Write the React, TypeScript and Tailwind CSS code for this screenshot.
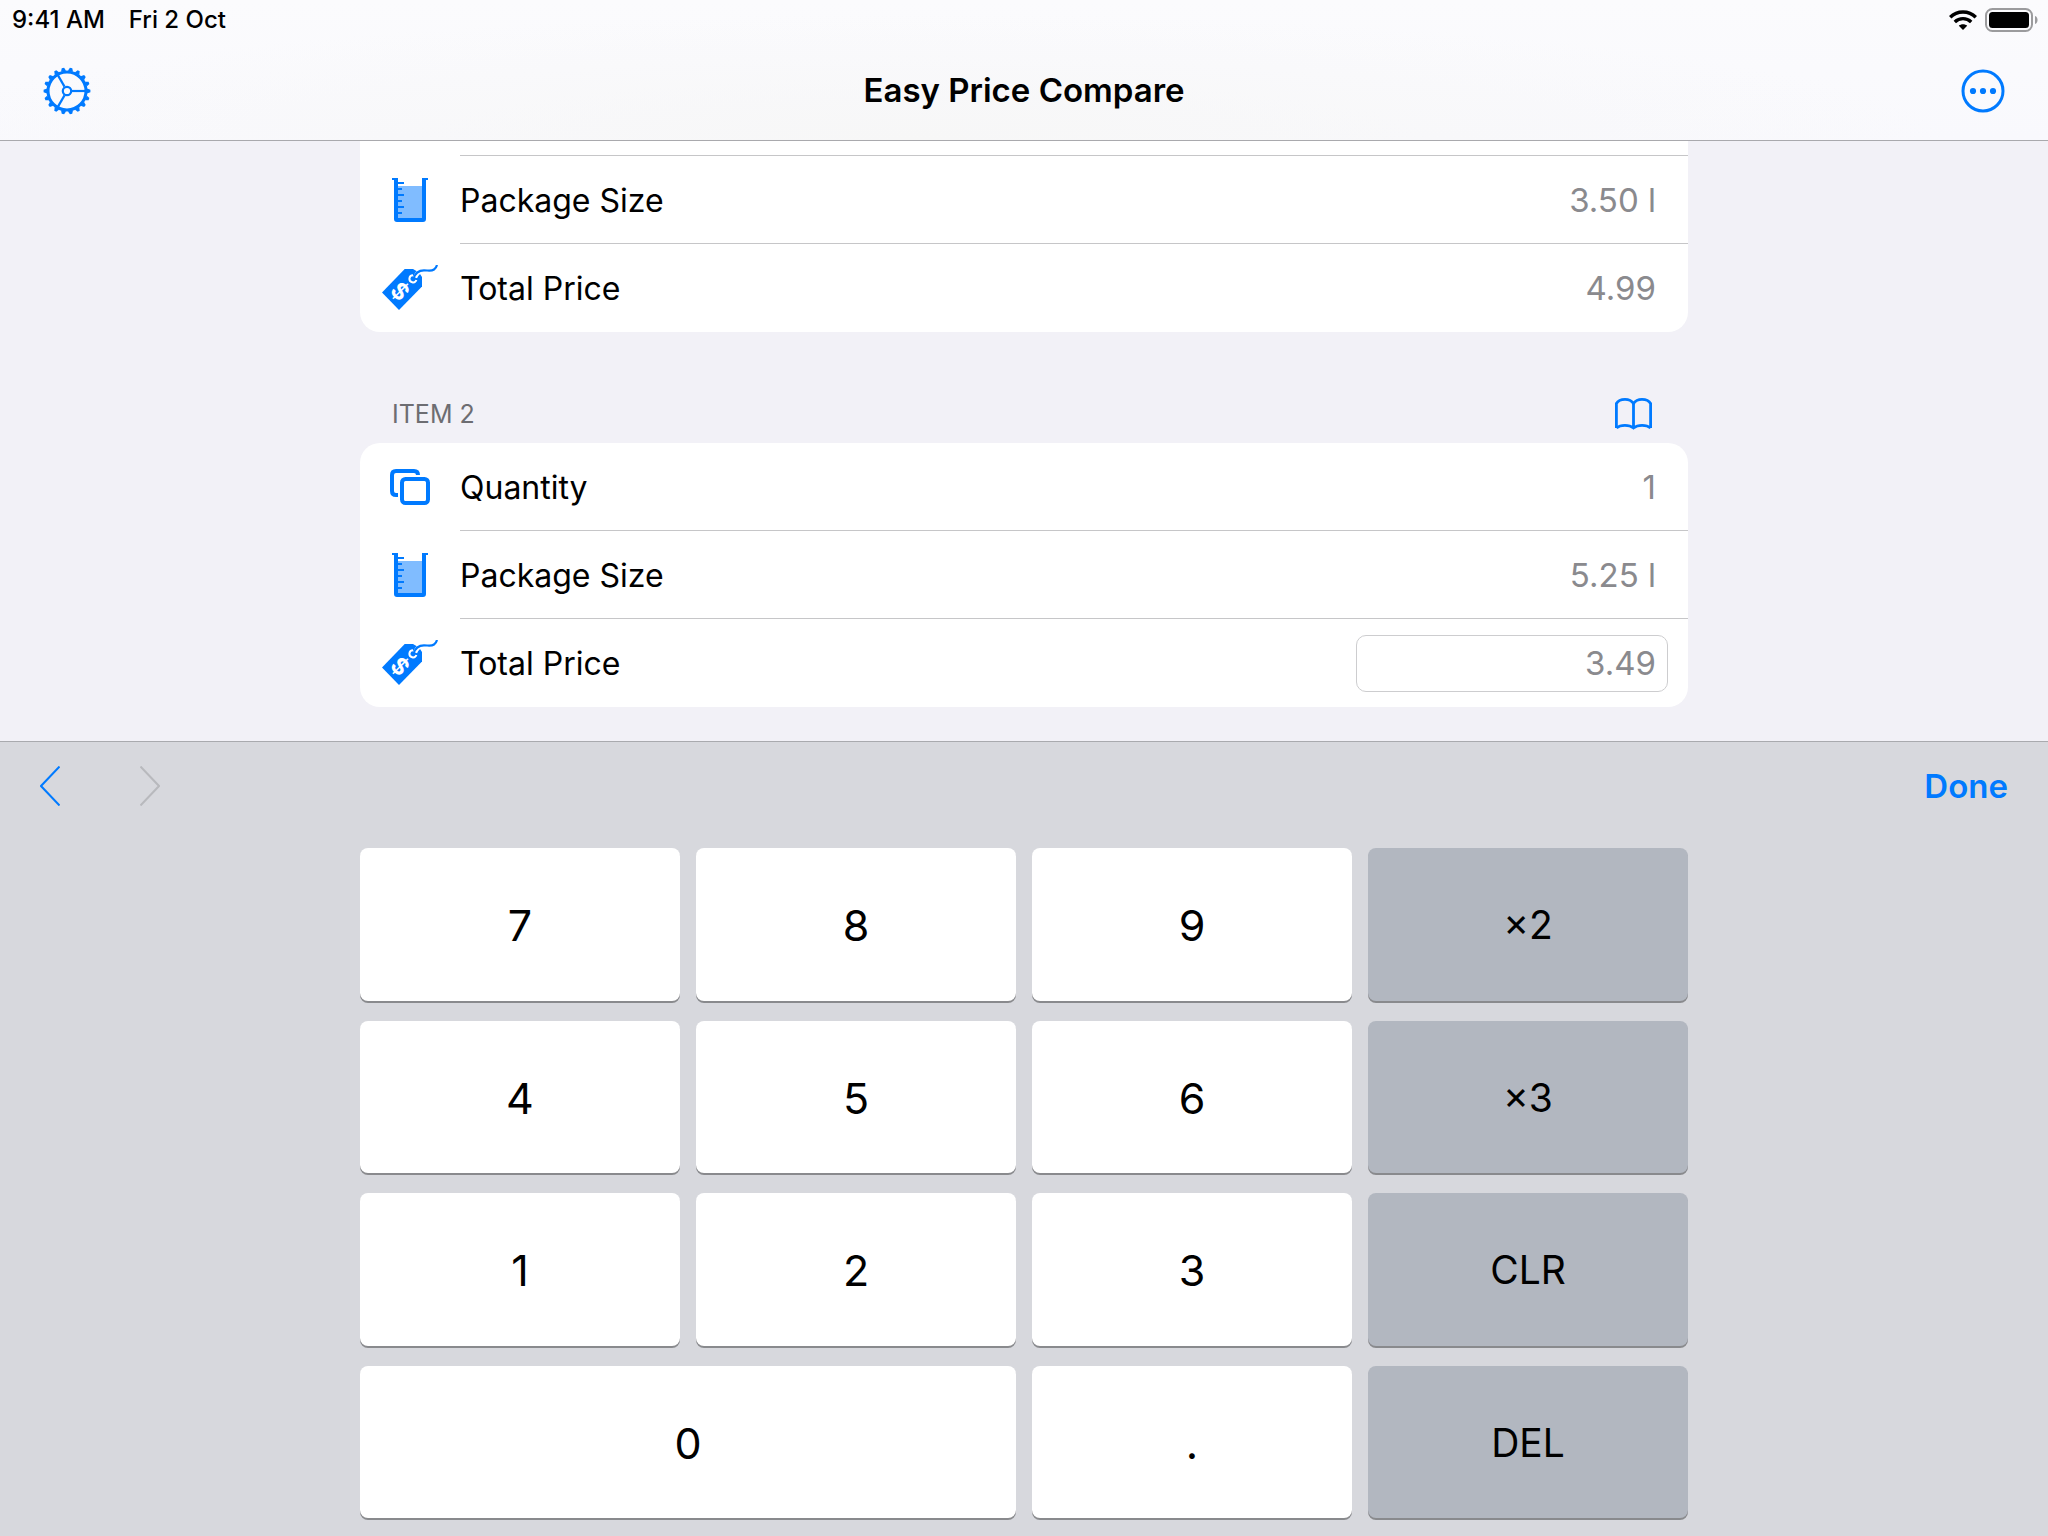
import React, { useState } from 'react';
import clsx from 'clsx';

const TEETH = Array.from({ length: 18 }, (_, i) => i * 20);

const GearIcon = () => (
  <svg width="48" height="48" viewBox="-24 -24 48 48" fill="none" stroke="currentColor">
    <circle r="19" strokeWidth="3" />
    <circle r="4.2" strokeWidth="2.2" />
    {[0, 120, 240].map((a) => (
      <path key={a} d="M5 0H18" strokeWidth="2.2" transform={`rotate(${a})`} />
    ))}
    {TEETH.map((a) => (
      <path
        key={a}
        d="M20 -2.6L23.4 -1.2V1.2L20 2.6Z"
        fill="currentColor"
        stroke="none"
        transform={`rotate(${a})`}
      />
    ))}
  </svg>
);

const MoreIcon = () => (
  <svg width="44" height="44" viewBox="0 0 44 44" fill="currentColor">
    <circle cx="22" cy="22" r="20" fill="none" stroke="currentColor" strokeWidth="3" />
    <circle cx="12" cy="22" r="3.1" />
    <circle cx="22" cy="22" r="3.1" />
    <circle cx="32" cy="22" r="3.1" />
  </svg>
);

const WifiIcon = () => (
  <svg width="28" height="20" viewBox="0 0 28 20" fill="none" stroke="currentColor">
    <path d="M1.2 7.2C8.2 0.2 19.8 0.2 26.8 7.2" strokeWidth="3.4" />
    <path d="M5.8 11.9C10.4 7.5 17.6 7.5 22.2 11.9" strokeWidth="3.4" />
    <path d="M14 20L9.8 15.8C12.2 13.8 15.8 13.8 18.2 15.8Z" fill="currentColor" stroke="none" />
  </svg>
);

const BatteryIcon = () => (
  <svg width="54" height="24" viewBox="0 0 54 24">
    <rect x="1" y="1" width="46" height="22" rx="6.5" fill="none" stroke="#9b9b9d" strokeWidth="2" />
    <rect x="4" y="4" width="40" height="16" rx="3.5" />
    <path d="M50 8C53.4 9 53.4 15 50 16Z" fill="#9b9b9d" />
  </svg>
);

const BookIcon = () => (
  <svg width="37" height="32" viewBox="0 0 37 32" fill="none" stroke="currentColor" strokeWidth="2.8">
    <path d="M1.4 30V5.5C3.2 2.4 6.500 1.4 10 1.4S16.500 2.500 18.500 5.500C20.500 2.500 23.500 1.4 27 1.4S33.800 2.400 35.600 5.500V30" />
    <path d="M1.4 30C5.600 26.500 14.200 26.500 18.500 30C22.800 26.500 31.400 26.500 35.600 30M18.500 5V30" />
  </svg>
);

const QuantityIcon = () => (
  <svg width="40" height="36" viewBox="0 0 40 36" fill="none" stroke="currentColor" strokeWidth="4">
    <path d="M8 26H6Q2 26 2 22V6Q2 2 6 2H24Q28 2 28 6" />
    <rect x="12" y="10" width="26" height="24" rx="3.5" />
  </svg>
);

const BeakerIcon = () => (
  <svg width="36" height="44" viewBox="0 0 36 44" fill="currentColor">
    <path d="M5 8H31V41H5Z" fill="#80bcff" />
    <path d="M0 0H6V40H30V0H36V2H34V41Q34 44 31 44H5Q2 44 2 41V2H0Z" />
    <path d="M6 4h6v2H6zM6 10h4v2H6zM6 16h6v2H6zM6 22h4v2H6zM6 28h6v2H6zM6 34h4v2H6z" />
  </svg>
);

const TagIcon = () => (
  <svg width="56" height="46" viewBox="0 0 56 46" fill="none">
    <path d="M0 27.5L22.7 4H31L37 7.5L40 12V21.5L17 45Z" fill="currentColor" />
    <path d="M31 10.200A3.600 3.600 0 1 0 34.400 15" stroke="#fff" strokeWidth="2" />
    <path d="M33 12.500C34.500 8.500 37.500 5.800 42 5.600" stroke="#fff" strokeWidth="4.400" />
    <path
      d="M31.5 13.6C33 8.500 37 5.300 42 5.300C46 5.300 49 6.500 52 4.500C54 3.200 54.500 1.800 55 0"
      stroke="currentColor"
      strokeWidth="2.200"
    />
    <text
      x="0"
      y="8"
      textAnchor="middle"
      transform="translate(18 26.500) rotate(45)"
      className="fill-white text-[23px] font-bold"
    >
      $
    </text>
  </svg>
);

const Chevron = ({ d }: { d: string }) => (
  <svg width="20" height="40" viewBox="0 0 20 40" fill="none" stroke="currentColor" strokeWidth="2">
    <path d={d} />
  </svg>
);

interface RowProps {
  id: string;
  icon: React.ReactNode;
  label: string;
  value: string;
  active?: boolean;
  last?: boolean;
}

const Row = ({ id, icon, label, value, active, last }: RowProps) => {
  const [text, setText] = useState(value);
  return (
    <div className="flex h-[88px]">
      <div className="flex w-[100px] shrink-0 items-center justify-center text-[#007aff]">{icon}</div>
      <div
        className={clsx(
          'flex grow items-center justify-between pr-5',
          !last && 'border-b border-[#c6c6c8]'
        )}
      >
        <label htmlFor={id} className="pt-0.5 text-[32px]">
          {label}
        </label>
        <input
          id={id}
          value={text}
          onChange={(e) => setText(e.target.value)}
          className={clsx(
            'h-[57px] w-[312px] rounded-[10px] border bg-transparent px-[11px] text-right text-[33px] text-[#8a8a8e] outline-none',
            active ? 'border-[#cdcdcf]' : 'border-transparent'
          )}
        />
      </div>
    </div>
  );
};

interface KeyDef {
  label: string;
  wide?: boolean;
  fn?: boolean;
}

const KEYS: KeyDef[] = [
  { label: '7' },
  { label: '8' },
  { label: '9' },
  { label: '×2', fn: true },
  { label: '4' },
  { label: '5' },
  { label: '6' },
  { label: '×3', fn: true },
  { label: '1' },
  { label: '2' },
  { label: '3' },
  { label: 'CLR', fn: true },
  { label: '0', wide: true },
  { label: '.' },
  { label: 'DEL', fn: true },
];

const App: React.FC = () => {
  return (
    <div className="flex min-h-screen flex-col bg-[#f2f1f7] font-['Inter',sans-serif] text-black">
      {/* Status bar + navigation bar */}
      <header className="border-b border-[#a9a9ad] bg-[radial-gradient(50%_90%_at_45%_100%,#f7f7f7,transparent),linear-gradient(#fbfbfd,#f9f9fd)]">
        <div className="flex h-10 items-center justify-between pr-[9px] pl-3 text-[24px] font-medium">
          <div className="flex gap-6">
            <span>9:41 AM</span>
            <span>Fri 2 Oct</span>
          </div>
          <div className="flex items-center gap-2">
            <WifiIcon />
            <BatteryIcon />
          </div>
        </div>
        <div className="grid h-[100px] grid-cols-[1fr_auto_1fr] items-center px-[43px] pt-0.5">
          <button aria-label="Settings" className="justify-self-start text-[#007aff]">
            <GearIcon />
          </button>
          <h1 className="text-[33px] font-semibold">Easy Price Compare</h1>
          <button aria-label="More" className="justify-self-end text-[#007aff]">
            <MoreIcon />
          </button>
        </div>
      </header>

      {/* Items */}
      <main className="mx-auto w-full max-w-[1328px] pb-[34px]">
        <section className="overflow-hidden rounded-b-[20px] bg-white">
          <div className="ml-[100px] h-[15px] border-b border-[#c6c6c8]" />
          <Row id="size-1" icon={<BeakerIcon />} label="Package Size" value="3.50 l" />
          <Row id="price-1" icon={<TagIcon />} label="Total Price" value="4.99" last />
        </section>

        <div className="flex items-center justify-between pt-[53px] pr-9 pl-8">
          <h2 className="text-[25px] leading-[58px] text-[#6d6d72]">ITEM 2</h2>
          <button aria-label="History" className="text-[#007aff]">
            <BookIcon />
          </button>
        </div>
        <section className="overflow-hidden rounded-[20px] bg-white">
          <Row id="quantity-2" icon={<QuantityIcon />} label="Quantity" value="1" />
          <Row id="size-2" icon={<BeakerIcon />} label="Package Size" value="5.25 l" />
          <Row id="price-2" icon={<TagIcon />} label="Total Price" value="3.49" active last />
        </section>
      </main>

      {/* Keyboard */}
      <section className="flex grow flex-col border-t border-[#a9aaae] bg-[#d7d8dd] pb-[18px]">
        <div className="mb-[18px] flex h-[88px] items-center justify-between px-10">
          <div className="flex gap-20">
            <button aria-label="Previous field" className="text-[#007aff]">
              <Chevron d="M19.500 0.500L1 20L19.500 39.500" />
            </button>
            <button aria-label="Next field" disabled className="text-[#b8b9bd]">
              <Chevron d="M0.500 0.500L19 20L0.500 39.500" />
            </button>
          </div>
          <button className="pt-0.5 text-[33px] font-semibold text-[#007aff]">Done</button>
        </div>
        <div className="mx-auto grid w-full max-w-[1328px] grow auto-rows-fr grid-cols-4 gap-x-4 gap-y-5">
          {KEYS.map((key) => (
            <button
              key={key.label}
              className={clsx(
                'rounded-lg pt-0.5 shadow-[0_2px_0_#898a8d]',
                key.wide && 'col-span-2',
                key.fn ? 'bg-[#b2b7c0] text-[39px]' : 'bg-white text-[43px]'
              )}
            >
              {key.label}
            </button>
          ))}
        </div>
      </section>
    </div>
  );
};

export default App;
